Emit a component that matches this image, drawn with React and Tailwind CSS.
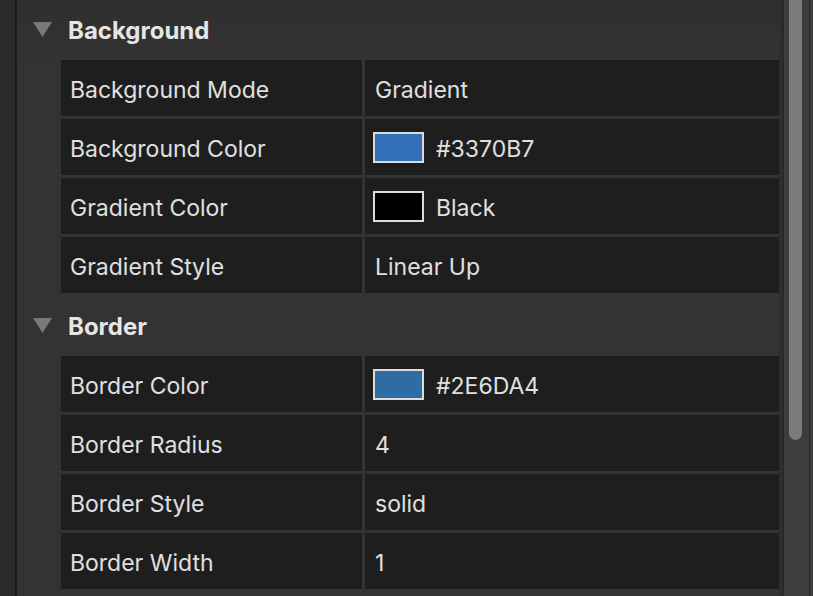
import React from 'react';

const sections = [
  {
    title: 'Background',
    rows: [
      { label: 'Background Mode', value: 'Gradient' },
      { label: 'Background Color', value: '#3370B7', swatch: '#3370B7' },
      { label: 'Gradient Color', value: 'Black', swatch: '#000000' },
      { label: 'Gradient Style', value: 'Linear Up' },
    ],
  },
  {
    title: 'Border',
    rows: [
      { label: 'Border Color', value: '#2E6DA4', swatch: '#2E6DA4' },
      { label: 'Border Radius', value: '4' },
      { label: 'Border Style', value: 'solid' },
      { label: 'Border Width', value: '1' },
    ],
  },
];

function Row({ label, value, swatch }) {
  return (
    <div className="flex h-[56px] gap-[3px]">
      <div className="w-[301px] bg-[#1e1e1e] flex items-center pl-[9px] pt-[5px]">
        {label}
      </div>
      <div className="flex-1 bg-[#1e1e1e] flex items-center pl-[8px] pt-[5px]">
        {swatch && (
          <span
            className="w-[51px] h-[31px] border-2 border-[#dcdcdc] mr-[12px] -mt-[5px]"
            style={{ backgroundColor: swatch }}
          />
        )}
        <span className={swatch ? '' : 'pl-[2px]'}>{value}</span>
      </div>
    </div>
  );
}

function Section({ title, rows }) {
  return (
    <div>
      <div className="h-[60px] flex items-center">
        <svg width="19" height="16" viewBox="0 0 19 16" className="ml-[16px] mr-[16px]">
          <polygon points="0,0 19,0 9.5,15" fill="#787878" />
        </svg>
        <span className="font-bold text-[24px] text-[#e6e6e6] pt-[2px]">{title}</span>
      </div>
      <div className="flex flex-col gap-[3px] pl-[44px]">
        {rows.map((r) => (
          <Row key={r.label} {...r} />
        ))}
      </div>
      <div className="h-[3px]" />
    </div>
  );
}

export default function App() {
  return (
    <div
      className="w-[813px] h-[596px] overflow-hidden flex bg-[#323232] text-[#e0e0e0] text-[23px]"
      style={{ fontFamily: 'Inter, "Liberation Sans", sans-serif' }}
    >
      <div className="w-[15px] bg-[#2b2b2b]" />
      <div className="w-[2px] bg-[#1c1c1c]" />
      <div className="w-[762px] bg-gradient-to-b from-[#2f2f2f] to-[#333333] to-[60px] flex flex-col">
        {sections.map((s) => (
          <Section key={s.title} {...s} />
        ))}
      </div>
      <div className="w-[4px] bg-[#2e2e2e]" />
      <div className="w-[1px] bg-[#262626]" />
      <div className="w-[25px] bg-[#3d3d3d] flex justify-center pl-[1px] pr-[3px]">
        <div className="w-[13px] h-[450px] -mt-[10px] bg-[#7b7b7b] rounded-b-full" />
      </div>
      <div className="w-[1px] bg-[#262626]" />
      <div className="w-[3px] bg-[#3a3a3a]" />
    </div>
  );
}
